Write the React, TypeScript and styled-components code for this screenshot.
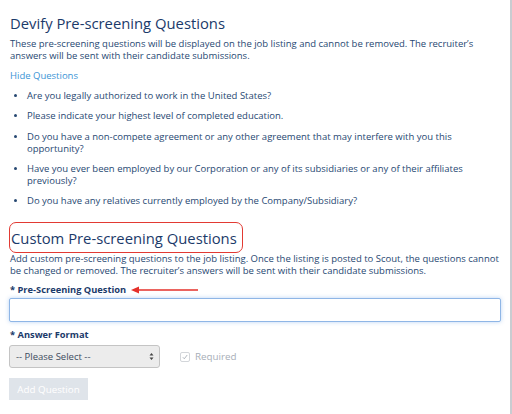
import styled, { createGlobalStyle } from "styled-components";

const GlobalStyle = createGlobalStyle`
  html, body {
    margin: 0;
    padding: 0;
    background: #ffffff;
  }
  body {
    font-family: "Open Sans", "Liberation Sans", sans-serif;
  }
`;

const Page = styled.div`
  width: 512px;
  height: 414px;
  border-right: 2px solid #c9ccd1;
  padding: 0 0 0 9px;
  box-sizing: border-box;
  overflow: hidden;
  color: #1f3d68;
`;

const Title = styled.h1`
  margin: 13px 0 0 1px;
  font-size: 14.8px;
  font-weight: 400;
  line-height: 20px;
  color: #1b3a6a;
`;

const Text = styled.p<{ $top?: number }>`
  margin: ${(p) => p.$top ?? 5}px 0 0 1px;
  font-size: 9.5px;
  line-height: 12px;
  color: #274872;
`;

const Toggle = styled.a`
  display: block;
  margin: 8px 0 0 1px;
  font-size: 9.5px;
  line-height: 12px;
  color: #3b95d6;
`;

const QuestionList = styled.ul`
  display: flex;
  flex-direction: column;
  gap: 8.3px;
  margin: 8px 0 0 0;
  padding: 0 20px 0 18px;
  list-style: disc;
  li {
    font-size: 9.5px;
    line-height: 12px;
    color: #274872;
  }
  li::marker {
    font-size: 8px;
  }
`;

const CustomTitle = styled.h2`
  width: fit-content;
  margin: 15px 0 0 0;
  padding: 5px 5px 4px 1px;
  font-size: 14.8px;
  font-weight: 400;
  line-height: 20px;
  color: #1b3a6a;
  border: 1.5px solid #e23a33;
  border-radius: 7px;
`;

const Label = styled.div<{ $top: number }>`
  display: flex;
  align-items: center;
  gap: 5px;
  margin: ${(p) => p.$top}px 0 0 1px;
  font-size: 9.3px;
  font-weight: 700;
  line-height: 14px;
  color: #1b3a6a;
`;

const Arrow = styled.svg`
  display: block;
`;

const TextInput = styled.input`
  display: block;
  width: 492px;
  height: 24px;
  margin: 1px 0 0 0;
  box-sizing: border-box;
  border: 1px solid #8fb6e6;
  border-radius: 2px;
  box-shadow: 0 0 4px rgba(102, 160, 230, 0.45);
  outline: none;
`;

const Row = styled.div`
  display: flex;
  align-items: center;
  gap: 20px;
  margin-top: 3px;
`;

const Select = styled.div`
  display: flex;
  align-items: center;
  justify-content: space-between;
  width: 151px;
  height: 23px;
  box-sizing: border-box;
  padding: 0 5px 0 6px;
  background: #ececec;
  border: 1px solid #c4c4c4;
  border-radius: 3px;
  font-size: 9.5px;
  color: #3c4b5e;
`;

const Check = styled.label`
  display: flex;
  align-items: center;
  gap: 5px;
  font-size: 9.8px;
  color: #a7aeb7;
`;

const Box = styled.span`
  width: 8px;
  height: 8px;
  border: 1px solid #d3d6da;
  border-radius: 2px;
  display: flex;
  align-items: center;
  justify-content: center;
`;

const Button = styled.button`
  display: block;
  margin: 10px 0 0 0;
  width: 79px;
  height: 22px;
  border: none;
  background: #dfe4ea;
  color: #ffffff;
  font-family: "Open Sans", "Liberation Sans", sans-serif;
  font-size: 9.8px;
  padding: 0;
`;

const questions = [
  "Are you legally authorized to work in the United States?",
  "Please indicate your highest level of completed education.",
  "Do you have a non-compete agreement or any other agreement that may interfere with you this opportunity?",
  "Have you ever been employed by our Corporation or any of its subsidiaries or any of their affiliates previously?",
  "Do you have any relatives currently employed by the Company/Subsidiary?",
];

export default function App() {
  return (
    <>
      <GlobalStyle />
      <Page>
        <Title>Devify Pre-screening Questions</Title>
        <Text>
          These pre-screening questions will be displayed on the job listing and cannot be removed. The recruiter’s
          answers will be sent with their candidate submissions.
        </Text>
        <Toggle>Hide Questions</Toggle>
        <QuestionList>
          {questions.map((q) => (
            <li key={q}>{q}</li>
          ))}
        </QuestionList>
        <CustomTitle>Custom Pre-screening Questions</CustomTitle>
        <Text $top={0}>
          Add custom pre-screening questions to the job listing. Once the listing is posted to Scout, the questions cannot
          be changed or removed. The recruiter’s answers will be sent with their candidate submissions.
        </Text>
        <Label $top={6}>
          * Pre-Screening Question
          <Arrow width="67" height="8" viewBox="0 0 67 8">
            <line x1="6" y1="4" x2="67" y2="4" stroke="#e5302a" strokeWidth="1.4" />
            <path d="M0 4 L8 0.5 L8 7.5 Z" fill="#e5302a" />
          </Arrow>
        </Label>
        <TextInput />
        <Label $top={6}>* Answer Format</Label>
        <Row>
          <Select>
            <span>-- Please Select --</span>
            <svg width="5" height="9" viewBox="0 0 5 9">
              <path d="M0.5 3.5 L2.5 1 L4.5 3.5 Z M0.5 5.5 L2.5 8 L4.5 5.5 Z" fill="#444" />
            </svg>
          </Select>
          <Check>
            <Box>
              <svg width="6" height="6" viewBox="0 0 6 6">
                <path d="M0.8 3.2 L2.3 4.8 L5.2 1" stroke="#a9b0b8" strokeWidth="0.9" fill="none" />
              </svg>
            </Box>
            Required
          </Check>
        </Row>
        <Button>Add Question</Button>
      </Page>
    </>
  );
}
